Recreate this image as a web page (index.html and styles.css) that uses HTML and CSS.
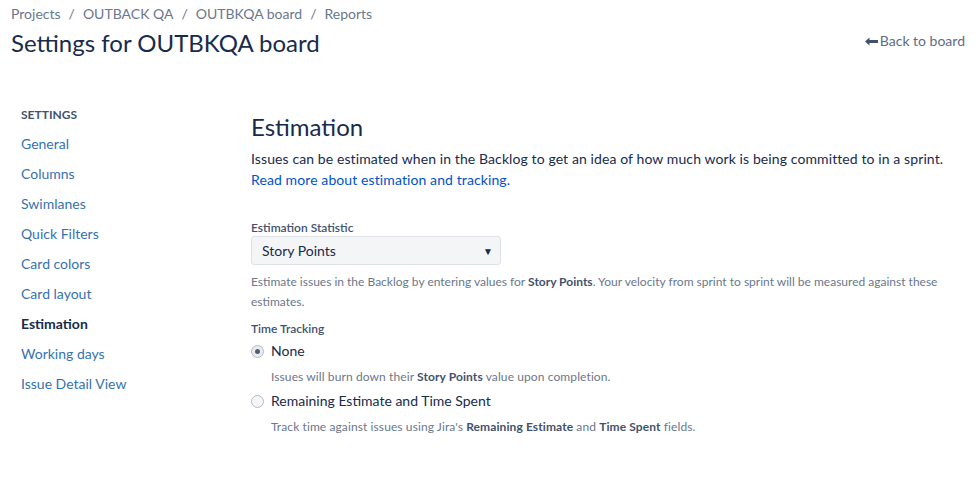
FILE: index.html
```html
<!DOCTYPE html>
<html>
<head>
<meta charset="utf-8">
<link rel="stylesheet" href="styles.css">
</head>
<body>
<header class="page-header">
  <div class="header-main">
    <nav class="breadcrumbs">
      <a>Projects</a><span class="sep">/</span><a>OUTBACK QA</a><span class="sep">/</span><a>OUTBKQA board</a><span class="sep">/</span><a>Reports</a>
    </nav>
    <h1 class="page-title">Settings for OUTBKQA board</h1>
  </div>
  <a class="back-link">
    <svg class="back-icon" width="13" height="9" viewBox="0 0 13 9"><path d="M0 4.5 L4.5 0.5 L4.5 3 L13 3 L13 6 L4.5 6 L4.5 8.5 Z" fill="#42526e"/></svg>Back to board
  </a>
</header>
<div class="layout">
  <aside class="sidebar">
    <div class="sidebar-heading">SETTINGS</div>
    <ul class="nav-list">
      <li><a>General</a></li>
      <li><a>Columns</a></li>
      <li><a>Swimlanes</a></li>
      <li><a>Quick Filters</a></li>
      <li><a>Card colors</a></li>
      <li><a>Card layout</a></li>
      <li class="active"><a>Estimation</a></li>
      <li><a>Working days</a></li>
      <li><a>Issue Detail View</a></li>
    </ul>
  </aside>
  <main class="content">
    <h2 class="section-title">Estimation</h2>
    <p class="intro">Issues can be estimated when in the Backlog to get an idea of how much work is being committed to in a sprint.<br><a class="link">Read more about estimation and tracking.</a></p>
    <div class="field">
      <label class="field-label">Estimation Statistic</label>
      <div class="select">Story Points<span class="caret">▼</span></div>
      <p class="desc">Estimate issues in the Backlog by entering values for <b>Story Points</b>. Your velocity from sprint to sprint will be measured against these estimates.</p>
    </div>
    <div class="field">
      <label class="field-label">Time Tracking</label>
      <div class="radio-row"><span class="radio checked"></span>None</div>
      <p class="radio-desc">Issues will burn down their <b>Story Points</b> value upon completion.</p>
      <div class="radio-row"><span class="radio"></span>Remaining Estimate and Time Spent</div>
      <p class="radio-desc">Track time against issues using Jira's <b>Remaining Estimate</b> and <b>Time Spent</b> fields.</p>
    </div>
  </main>
</div>
</body>
</html>
```
FILE: styles.css
```css
* { box-sizing: border-box; }
body {
  margin: 0;
  font-family: Lato, "Noto Sans", sans-serif;
  font-size: 14px;
  color: #172b4d;
  background: #fff;
}
a { text-decoration: none; cursor: pointer; }
.page-header {
  display: flex;
  justify-content: space-between;
  align-items: flex-start;
  padding: 4px 14px 0 11px;
}
.breadcrumbs {
  color: #6b778c;
  font-size: 14px;
  line-height: 20px;
}
.breadcrumbs a { color: #6b778c; }
.sep { margin: 0 8px; }
.page-title {
  margin: 2px 0 0;
  font-size: 24px;
  font-weight: 400;
  line-height: 34px;
  color: #172b4d;
}
.back-link {
  margin-top: 27px;
  color: #5e6c84;
  font-size: 14px;
  line-height: 20px;
  display: flex;
  align-items: center;
}
.back-icon { margin-right: 2px; }
.layout {
  display: flex;
  padding-top: 45px;
}
.sidebar {
  width: 251px;
  padding-left: 21px;
}
.sidebar-heading {
  font-size: 12px;
  font-weight: 700;
  color: #42526e;
  line-height: 20px;
  margin-bottom: 9px;
}
.nav-list { list-style: none; margin: 0; padding: 0; display: flex; flex-direction: column; gap: 10px; }
.nav-list a { color: #3572b0; line-height: 20px; display: block; }
.nav-list .active a { color: #172b4d; font-weight: 700; }
.content { flex: 1; padding-top: 6px; }
.section-title {
  margin: 0;
  font-size: 24px;
  font-weight: 400;
  line-height: 32px;
}
.intro { margin: 5px 0 0; line-height: 21px; color: #172b4d; letter-spacing: 0.1px; }
.link { color: #0052cc; }
.field { margin-top: 29px; }
.field + .field { margin-top: 8px; }
.field-label {
  display: block;
  font-size: 12px;
  font-weight: 600;
  color: #42526e;
  line-height: 18px;
}
.select {
  width: 250px;
  height: 29px;
  margin-top: -1px;
  background: #f4f5f7;
  border: 1px solid #dfe1e6;
  border-radius: 3px;
  padding: 0 7px 0 10px;
  display: flex;
  align-items: center;
  justify-content: space-between;
  color: #172b4d;
}
.caret { font-size: 10px; color: #172b4d; }
.desc {
  margin: 7px 0 0;
  font-size: 12px;
  line-height: 20px;
  color: #6b778c;
  padding-right: 20px;
}
.desc b, .radio-desc b { color: #42526e; font-weight: 700; }
.radio-row {
  display: flex;
  align-items: center;
  margin-top: 3px;
  line-height: 20px;
  color: #172b4d;
}
.radio {
  width: 13px;
  height: 13px;
  border: 1px solid #b3bac5;
  border-radius: 50%;
  background: #f4f5f7;
  margin: 0 7px 0 0;
  position: relative;
  flex: none;
}
.radio.checked { background: #ebecf0; }
.radio.checked::after {
  content: "";
  position: absolute;
  left: 3px; top: 3px;
  width: 5px; height: 5px;
  border-radius: 50%;
  background: #505f79;
}
.radio-desc {
  margin: 6px 0 4px 20px;
  font-size: 12px;
  line-height: 20px;
  color: #6b778c;
  letter-spacing: 0.1px;
}
```
